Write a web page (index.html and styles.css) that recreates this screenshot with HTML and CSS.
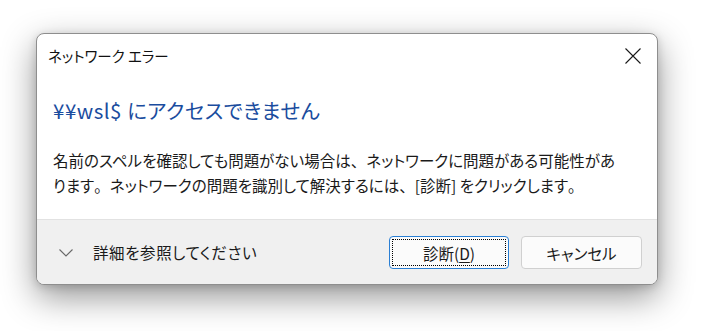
FILE: index.html
```html
<!DOCTYPE html>
<html lang="ja">
<head>
<meta charset="utf-8">
<title>ネットワーク エラー</title>
<link rel="stylesheet" href="styles.css">
</head>
<body>
<div class="dialog">
  <div class="titlebar">
    <span class="title">ネットワーク エラー</span>
    <button class="close" aria-label="閉じる">
      <svg width="16" height="16" viewBox="0 0 16 16"><path d="M0.5 0.5 L15.5 15.5 M15.5 0.5 L0.5 15.5" stroke="#1a1a1a" stroke-width="1.1" fill="none"/></svg>
    </button>
  </div>
  <div class="content">
    <h1 class="heading">¥¥wsl$ にアクセスできません</h1>
    <p class="message">名前のスペルを確認しても問題がない場合は<span class="punct">、</span>ネットワークに問題がある可能性があ<br>ります<span class="punct">。</span>ネットワークの問題を識別して解決するには<span class="punct">、</span>[診断] をクリックします<span class="punct">。</span></p>
  </div>
  <div class="footer">
    <div class="details">
      <svg class="chevron" width="14" height="8" viewBox="0 0 14 8"><path d="M0.5 0.5 L7 7 L13.5 0.5" stroke="#6a6a6a" stroke-width="1.1" fill="none"/></svg>
      <span>詳細を参照してください</span>
    </div>
    <div class="buttons">
      <button class="btn primary"><span class="focus">診断(<u>D</u>)</span></button>
      <button class="btn">キャンセル</button>
    </div>
  </div>
</div>
</body>
</html>
```
FILE: styles.css
```css
html, body {
  margin: 0;
  padding: 0;
  background: #ffffff;
}
body {
  width: 708px;
  height: 331px;
  overflow: hidden;
  font-family: "Noto Sans CJK JP", "Noto Sans", sans-serif;
  font-feature-settings: "palt" 1;
  color: #1a1a1a;
}
.dialog {
  margin: 33px 0 0 36px;
  width: 622px;
  height: 252px;
  box-sizing: border-box;
  border: 1px solid #8e8e8e;
  border-radius: 8px;
  background: #ffffff;
  box-shadow: 0 12px 34px rgba(0, 0, 0, 0.42), 0 2px 8px rgba(0, 0, 0, 0.15);
  display: flex;
  flex-direction: column;
  overflow: hidden;
}
.titlebar {
  height: 44px;
  display: flex;
  align-items: center;
  justify-content: space-between;
  padding: 0 16px 0 11px;
}
.title {
  font-size: 14.5px;
  line-height: 20px;
  white-space: pre;
  color: #111;
}
.close {
  border: 0;
  background: transparent;
  padding: 0;
  width: 16px;
  height: 16px;
  display: flex;
}
.content {
  flex: 1;
  padding: 0 16px;
}
.heading {
  margin: 19px 0 0;
  font-weight: normal;
  font-size: 20.5px;
  letter-spacing: 0.5px;
  line-height: 26px;
  color: #1a4c9e;
}
.message {
  margin: 25px 0 0;
  font-size: 15.5px;
  line-height: 25px;
  color: #1a1a1a;
  white-space: nowrap;
}
.punct {
  font-feature-settings: "palt" 0;
}
.footer {
  height: 65px;
  box-sizing: border-box;
  border-top: 1px solid #e2e2e2;
  background: #f0f0f0;
  display: flex;
  align-items: center;
  justify-content: space-between;
  padding: 0 15px 0 22px;
}
.details {
  display: flex;
  align-items: center;
  gap: 20px;
  font-size: 15.5px;
  letter-spacing: 0.6px;
  color: #1a1a1a;
}
.chevron {
  margin-top: 2px;
}
.buttons {
  display: flex;
  gap: 12px;
  padding-top: 1px;
}
.btn {
  width: 121px;
  height: 33px;
  box-sizing: border-box;
  border: 1px solid #d0d0d0;
  border-radius: 4px;
  background: #fbfbfb;
  font-family: "Noto Sans CJK JP", "Noto Sans", sans-serif;
  font-feature-settings: "palt" 1;
  font-size: 15.5px;
  color: #1a1a1a;
  padding: 0;
  display: flex;
  align-items: center;
  justify-content: center;
}
.btn.primary {
  width: 120px;
  border-color: #2a7fd4;
  padding: 2px;
}
.focus {
  width: 100%;
  height: 100%;
  box-sizing: border-box;
  border: 1px dotted #000;
  display: flex;
  align-items: center;
  justify-content: center;
}
.focus u {
  text-underline-offset: 2px;
}
```
